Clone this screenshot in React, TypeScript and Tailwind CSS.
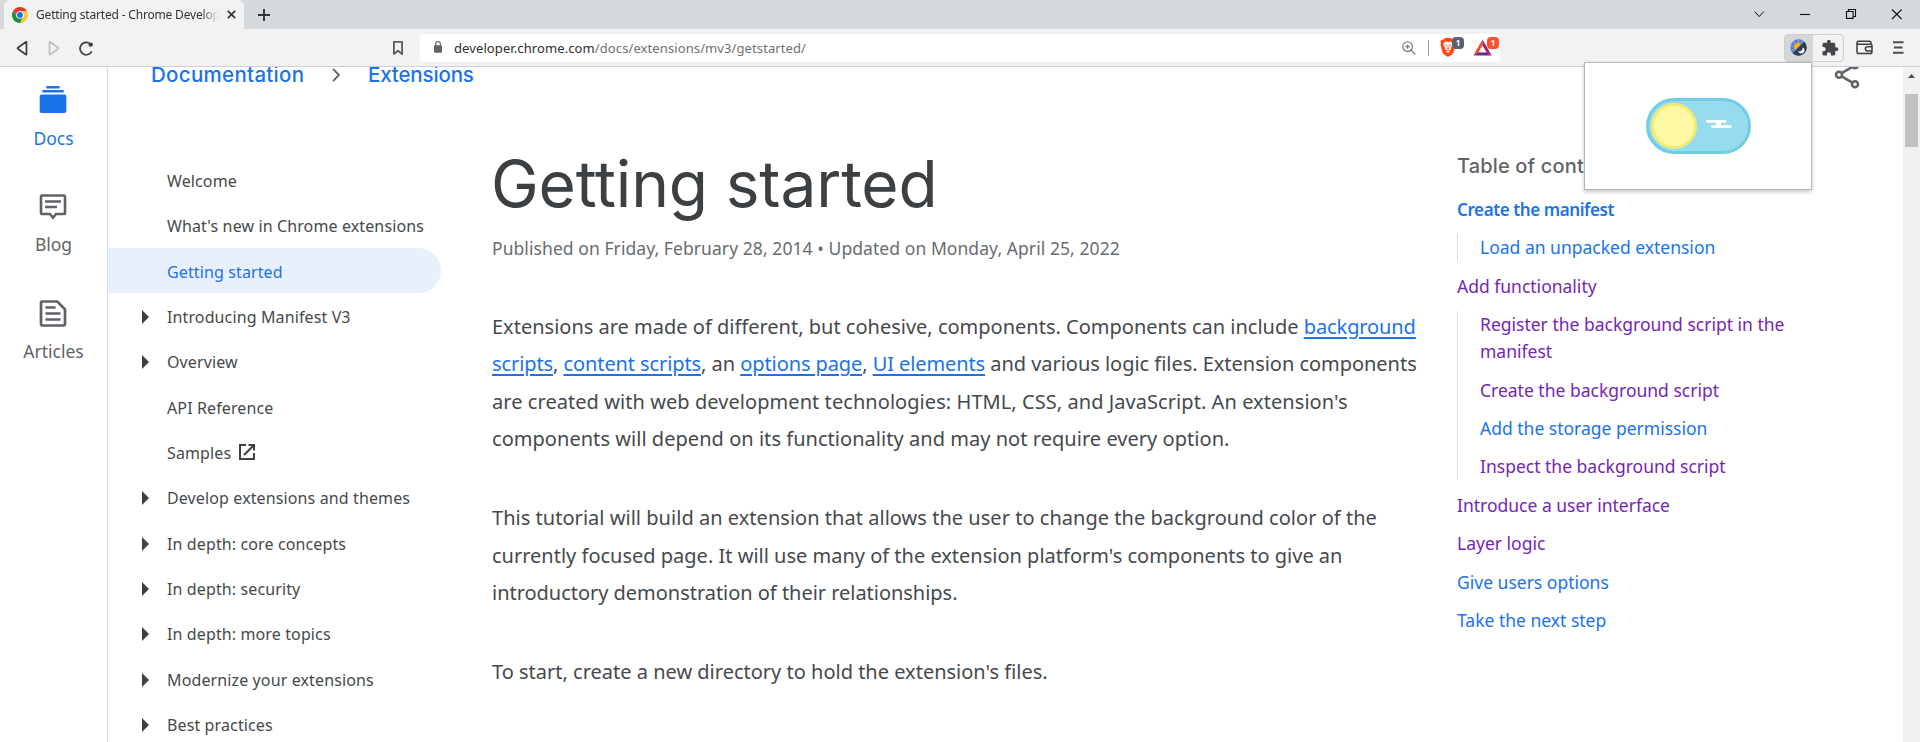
import type { ReactNode } from "react";

const ui = "font-['Noto_Sans','Open_Sans',sans-serif]";
const display = "font-['Inter',sans-serif]";

function ChromeLogo() {
  return (
    <svg width="16" height="16" viewBox="0 0 48 48" className="shrink-0">
      <path d="M24 13 H45.2 A24 24 0 0 0 3.2 12 L14.5 29.5 Z" fill="#e33b2e" />
      <path d="M33.5 29.5 L24 48 A24 24 0 0 0 45.2 13 H24 Z" fill="#fcc934" />
      <path d="M14.5 29.5 L3.2 12 A24 24 0 0 0 24 48 L33.5 29.5 Z" fill="#1e8e3e" />
      <circle cx="24" cy="24" r="11.5" fill="#fff" />
      <circle cx="24" cy="24" r="8.8" fill="#1a73e8" />
    </svg>
  );
}

function TabStrip() {
  return (
    <div className="flex h-[29px] shrink-0 items-stretch bg-[#d5d9dc] pl-1">
      <div className="flex w-60 items-center rounded-t-md bg-[#f2f2f2] pl-2">
        <ChromeLogo />
        <div className="ml-2 w-[183px] overflow-hidden text-[12px] leading-5 tracking-[-0.18px] whitespace-nowrap text-[#303236] [mask-image:linear-gradient(to_right,#000_165px,transparent_183px)]">
          Getting started - Chrome Developers
        </div>
        <svg width="9" height="9" viewBox="0 0 9 9" className="ml-2" stroke="#303236" strokeWidth="1.7">
          <path d="M.8 .8 8.2 8.2M8.2 .8 .8 8.2" />
        </svg>
      </div>
      <svg width="12" height="12" viewBox="0 0 12 12" className="mt-[9px] ml-3.5" stroke="#303236" strokeWidth="1.9">
        <path d="M6 0V12M0 6H12" />
      </svg>
      <div className="flex-1" />
      <svg width="166" height="29" viewBox="0 0 166 29" fill="none" stroke="#111" strokeWidth="1.1">
        <path d="M.6 11.5 5.2 16.6 9.8 11.5" strokeWidth="1" />
        <path d="M46 14.5H56" />
        <path d="M92.5 11.5h6.6v6.9h-6.6zM94.5 11.3V9.5h7v7h-2" />
        <path d="M138 9.5 147.6 19M147.6 9.5 138 19" />
      </svg>
    </div>
  );
}

function BraveLion() {
  return (
    <svg width="16" height="19" viewBox="0 0 16 19">
      <path d="M5 0h6l1.6 1.7 1.6-.2 1.4 2-.6 1.5.5 1.7-2 7.6c-.3 1.2-1 1.9-2 2.5L8 19l-3.500-2.200c-1-.6-1.700-1.300-2-2.500L.5 6.700 1 5 .4 3.500l1.400-2 1.600.2z" fill="#fb4a12" />
      <path d="M5.300 3.600 8 4.100 10.700 3.600 12.900 6 11.800 8.600 10.600 9.800 11.200 11.200 9.600 12.300 8 11.500 6.400 12.300 4.800 11.200 5.400 9.800 4.200 8.600 3.100 6z" fill="#fff" />
      <path d="M4.800 6.900 6.900 7.500M11.200 6.900 9.100 7.500M8 7.500v2.300M6.800 10.200 8 10.800 9.200 10.200" stroke="#fb4a12" strokeWidth="0.9" fill="none" />
      <path d="M6 13.200 8 12.400 10 13.200 8 14.900z" fill="#fff" />
    </svg>
  );
}

function BatTriangle() {
  return (
    <svg width="19" height="17" viewBox="0 0 19 17">
      <path d="M9.500 .5 .3 16.500 5.700 13.200 9.500 6.500z" fill="#ff4724" />
      <path d="M9.500 .5 18.700 16.500 13.300 13.200 9.500 6.500z" fill="#9e1f63" />
      <path d="M.3 16.500H18.700L13.300 13.200H5.700z" fill="#662d91" />
      <path d="M9.500 6.500 5.700 13.200H13.300z" fill="#fff" />
    </svg>
  );
}

function Toolbar() {
  return (
    <div className="flex h-[38px] shrink-0 items-center border-b border-[#cdd1d6] bg-[#f2f2f2]">
      <svg width="80" height="20" viewBox="0 0 80 20" className="ml-4" fill="none" strokeLinejoin="round" strokeWidth="1.7">
        <path d="M10.500 4.300V16.200Q10.500 17 9.800 16.500L1.800 10.800Q1.200 10.300 1.800 9.800L9.800 4Q10.500 3.600 10.500 4.300z" stroke="#3c3d40" />
        <path d="M33.500 4.300V16.200Q33.500 17 34.200 16.500L42.200 10.800Q42.800 10.300 42.200 9.800L34.200 4Q33.500 3.600 33.500 4.300z" stroke="#c0c0c0" />
        <path d="M75.700 13.400A6.200 6.200 0 1 1 73.200 5.100" stroke="#3c3d40" />
        <circle cx="74.700" cy="6.600" r="2.200" fill="#3c3d40" />
      </svg>
      <svg width="12" height="16" viewBox="0 0 12 16" className="ml-[296px]" fill="none" stroke="#5a5c60" strokeWidth="1.8">
        <path d="M1.900 1.900H10.100V14L6 10.700 1.900 14z" strokeLinejoin="round" />
      </svg>
      <div className="ml-4 flex h-7 w-[1080px] items-center rounded bg-white pl-3.5">
        <svg width="8" height="12" viewBox="0 0 8 12" className="mb-0.5">
          <path d="M1.700 5V2.800a2.300 2.300 0 0 1 4.600 0V5" fill="none" stroke="#5f6368" strokeWidth="1.200" />
          <rect y="4.200" width="8" height="7.600" rx="1" fill="#5f6368" />
        </svg>
        <div className="ml-3 text-[13px] leading-5 tracking-[0.1px] whitespace-nowrap text-[#6e7174]">
          <span className="text-[#2c2e31]">developer.chrome.com</span>/docs/extensions/mv3/getstarted/
        </div>
        <svg width="14" height="14" viewBox="0 0 14 14" className="ml-auto" fill="none" stroke="#6b6e73" strokeWidth="1.1">
          <circle cx="5.600" cy="5.600" r="4.800" />
          <path d="M9.200 9.200 13.300 13.300M5.600 3.400V7.800M3.400 5.600H7.800" />
        </svg>
        <div className="ml-3 h-4 w-px bg-[#9a9da1]" />
        <div className="relative ml-[11px]">
          <BraveLion />
          <span className="absolute -top-px left-3 flex h-3 w-3 items-center justify-center rounded-[4px] bg-[#5c6070] text-[8px] leading-none font-bold text-white">1</span>
        </div>
        <div className="relative mr-2 ml-[17px]">
          <BatTriangle />
          <span className="absolute -top-0.5 left-3.5 flex h-3 w-3 items-center justify-center rounded-[4px] bg-[#ff5029] text-[8px] leading-none font-bold text-white">1</span>
        </div>
      </div>
      <div className="ml-auto flex h-7 w-[60px] items-stretch overflow-hidden rounded border border-[#cfcfcf]">
        <div className="flex w-7 items-center justify-center bg-[#d6d6d6] pr-0.5">
          <svg width="17" height="17" viewBox="0 0 17 17">
            <circle cx="8.500" cy="8.500" r="8.200" fill="#4f7df5" />
            <path d="M14.300 2.700A8.200 8.200 0 1 1 2.700 14.300z" fill="#2c3e50" />
            <path d="M11 5 5.300 11A4 4 0 1 1 11 5z" fill="#ffb400" />
            <path d="M8.500 1.200V3M3.800 3.200 4.800 4.300M1.500 7.500H3M3 11.300 4 10.600M12.200 2.600 11.300 3.700" stroke="#ffb400" strokeWidth="1.200" />
            <path d="M12.500 8.200A3.300 3.300 0 1 1 8 12 3.200 3.200 0 0 0 12.500 8.200z" fill="#fff" />
          </svg>
        </div>
        <div className="flex flex-1 items-center justify-center pl-1">
          <svg width="18" height="18" viewBox="0 0 24 24" fill="#444649">
            <path d="M20.500 11H19V7c0-1.100-.9-2-2-2h-4V3.500a2.500 2.500 0 0 0-5 0V5H4c-1.100 0-1.990.9-1.990 2v3.800H3.500c1.490 0 2.700 1.210 2.700 2.700s-1.210 2.700-2.700 2.700H2V20c0 1.100.9 2 2 2h3.800v-1.500c0-1.490 1.210-2.700 2.700-2.700s2.700 1.210 2.700 2.700V22H17c1.100 0 2-.9 2-2v-4h1.500a2.500 2.500 0 0 0 0-5z" />
          </svg>
        </div>
      </div>
      <svg width="17" height="15" viewBox="0 0 17 15" className="ml-3" fill="none" stroke="#3c3d40" strokeWidth="1.500">
        <path d="M15 4.300V2.800Q15 1.300 13.500 1.300H2.500Q1 1.300 1 2.800V11.700Q1 13.500 2.800 13.500H14.200Q16 13.500 16 11.700V5.800Q16 4.300 14.500 4.300H2.500Q1 4.300 1 2.800" />
        <path d="M16 6.800H11.500a2.100 2.100 0 0 0 0 4.200H16" />
      </svg>
      <svg width="11" height="13" viewBox="0 0 11 13" className="mr-4 ml-5" stroke="#4b4d50" strokeWidth="2">
        <path d="M0 1.200H10.500M1 6.500H9.500M0 11.800H10.500" />
      </svg>
    </div>
  );
}

function RailItem({ icon, label, active }: { icon: ReactNode; label: string; active?: boolean }) {
  return (
    <div className={`flex h-[106.67px] flex-col items-center gap-[9.5px] ${active ? "text-[#1a73e8]" : "text-[#5f6368]"}`}>
      <svg width="32" height="32" viewBox="0 0 32 32" className="mr-px">{icon}</svg>
      <span className="text-[17.5px] leading-6">{label}</span>
    </div>
  );
}

function Rail() {
  return (
    <div className="w-[108px] shrink-0 border-r border-[#dadce0] pt-[17px]">
      <RailItem
        active
        label="Docs"
        icon={<path fill="currentColor" d="M9.300 2h13.400v2.600H9.300zM5.300 6h21.400v2.600H5.300zM4.500 10.500h23q1.800 0 1.800 1.800v14.900q0 1.800-1.800 1.800h-23q-1.800 0-1.800-1.800V12.300q0-1.800 1.800-1.800z" />}
      />
      <RailItem
        label="Blog"
        icon={
          <g fill="none" stroke="currentColor" strokeWidth="2.600">
            <path d="M5.300 4.500H26.700Q28 4.500 28 5.800V21.700Q28 23 26.700 23H19L16 26.700 13 23H5.300Q4 23 4 21.700V5.800Q4 4.500 5.300 4.500z" />
            <path d="M8 10.500H24M8 16H20" />
          </g>
        }
      />
      <RailItem
        label="Articles"
        icon={
          <g fill="none" stroke="currentColor" strokeWidth="2.700">
            <path d="M5.400 4.500H20.300L28 12.200V27.100Q28 28.500 26.600 28.500H5.400Q4 28.500 4 27.100V5.900Q4 4.500 5.400 4.500z" />
            <path d="M8.500 10.500H18.600M8.500 16.500H23.500M8.500 22.500H23.500" />
          </g>
        }
      />
    </div>
  );
}

const navItems: { label: string; arrow?: boolean; active?: boolean; external?: boolean }[] = [
  { label: "Welcome" },
  { label: "What's new in Chrome extensions" },
  { label: "Getting started", active: true },
  { label: "Introducing Manifest V3", arrow: true },
  { label: "Overview", arrow: true },
  { label: "API Reference" },
  { label: "Samples", external: true },
  { label: "Develop extensions and themes", arrow: true },
  { label: "In depth: core concepts", arrow: true },
  { label: "In depth: security", arrow: true },
  { label: "In depth: more topics", arrow: true },
  { label: "Modernize your extensions", arrow: true },
  { label: "Best practices", arrow: true },
];

function SideNav() {
  return (
    <nav className="w-[333px] pt-[62.5px] text-[16px] leading-6 tracking-[0.12px] whitespace-nowrap text-[#45494c]">
      {navItems.map((item) => (
        <div
          key={item.label}
          className={`flex h-[45.33px] items-center rounded-r-full pt-0.5 ${item.active ? "bg-[#e8f0fe] text-[#1a73e8]" : ""}`}
        >
          <div className="w-[59px] shrink-0 pl-[34px]">
            {item.arrow && (
              <svg width="7" height="14" viewBox="0 0 7 14" fill="#3c4043">
                <path d="M0 0 7 7 0 14z" />
              </svg>
            )}
          </div>
          {item.label}
          {item.external && (
            <svg width="18" height="18" viewBox="0 0 18 18" className="mb-0.5 ml-[7px]" fill="none" stroke="#3c4043" strokeWidth="2">
              <path d="M8 2H2V16H16V10M10.500 2H16V7.500M15.800 2.200 6 12" />
            </svg>
          )}
        </div>
      ))}
    </nav>
  );
}

function A({ children }: { children: ReactNode }) {
  return (
    <a className="tracking-[-0.1px] text-[#1a73e8] underline decoration-2 underline-offset-[3px]">{children}</a>
  );
}

function Article() {
  return (
    <article className="ml-[51px] w-[965px] pt-[53px] whitespace-nowrap text-[#45494c]">
      <h1 className={`-ml-px text-[64px] leading-[72px] tracking-[-0.15px] text-[#3c4043] ${display}`}>Getting started</h1>
      <p className="mt-4 text-[17.5px] leading-6 tracking-[0.07px] text-[#686c71]">
        Published on Friday, February 28, 2014 • Updated on Monday, April 25, 2022
      </p>
      <div className="mt-12 flex flex-col gap-[42px] text-[20px] leading-[37.33px]">
        <p>
          Extensions are made of different, but cohesive, components. Components can include <A>background</A>
          <br />
          <span className="tracking-[-0.03px]">
            <A>scripts</A>, <A>content scripts</A>, an <A>options page</A>, <A>UI elements</A> and various logic files. Extension components
          </span>
          <br />
          <span className="tracking-[0.06px]">are created with web development technologies: HTML, CSS, and JavaScript. An extension's</span>
          <br />
          <span className="tracking-[0.04px]">components will depend on its functionality and may not require every option.</span>
        </p>
        <p>
          <span className="tracking-[0.03px]">This tutorial will build an extension that allows the user to change the background color of the</span>
          <br />
          currently focused page. It will use many of the extension platform's components to give an
          <br />
          <span className="tracking-[-0.03px]">introductory demonstration of their relationships.</span>
        </p>
        <p>To start, create a new directory to hold the extension's files.</p>
      </div>
    </article>
  );
}

function TableOfContents() {
  return (
    <aside className="w-[365px] pt-[57px] text-[17.5px] leading-[27px] whitespace-nowrap text-[#7426b4]">
      <h2 className={`h-11 text-[20px] leading-7 font-medium tracking-[0.15px] text-[#5f6368] ${display}`}>Table of contents</h2>
      <div className="flex flex-col gap-[11.4px]">
        <div className="text-[17px] font-semibold tracking-[-0.4px] text-[#1a73e8]">Create the manifest</div>
        <div className="border-l border-[#dadce0] pl-[22px] text-[#1a73e8]">Load an unpacked extension</div>
        <div>Add functionality</div>
        <div className="flex flex-col gap-[11.4px] border-l border-[#dadce0] pl-[22px]">
          <div>
            Register the background script in the
            <br />
            manifest
          </div>
          <div>Create the background script</div>
          <div className="text-[#1a73e8]">Add the storage permission</div>
          <div>Inspect the background script</div>
        </div>
        <div>Introduce a user interface</div>
        <div>Layer logic</div>
        <div className="text-[#1a73e8]">Give users options</div>
        <div className="text-[#1a73e8]">Take the next step</div>
      </div>
    </aside>
  );
}

function Breadcrumbs() {
  return (
    <div className="flex h-7 shrink-0 items-start">
      <div className={`-mt-1.5 flex items-center pl-[43px] text-[20.5px] leading-7 font-medium tracking-[0.3px] text-[#1a73e8] ${display}`}>
        <span className="w-[153px]">Documentation</span>
        <svg width="8" height="14" viewBox="0 0 8 14" className="mx-7" fill="none" stroke="#5f6368" strokeWidth="1.900">
          <path d="M1 .8 7 7 1 13.200" />
        </svg>
        <span className="tracking-[-0.15px]">Extensions</span>
      </div>
      <svg width="26" height="30" viewBox="0 0 26 30" className="-mt-[7px] mr-[43px] ml-auto" fill="none" stroke="#5f6368" strokeWidth="2.500">
        <circle cx="5" cy="14.800" r="3" />
        <circle cx="21" cy="5.200" r="3" />
        <circle cx="21" cy="24.300" r="3" />
        <path d="M7.600 13.200 18.400 6.800M7.600 16.400 18.400 22.700" />
      </svg>
    </div>
  );
}

function Scrollbar() {
  return (
    <div className="flex w-[17px] shrink-0 flex-col items-center bg-[#f1f1f1] pt-[7px]">
      <svg width="7" height="4" viewBox="0 0 7 4" fill="#505050">
        <path d="M3.500 0 7 4H0z" />
      </svg>
      <div className="mt-4 h-[53px] w-[13px] bg-[#c1c1c1]" />
    </div>
  );
}

function ThemePopup() {
  return (
    <div className="absolute top-[62px] left-[1584px] flex h-32 w-[228px] items-center justify-center border border-[#b4b7b9] bg-white shadow-[0_2px_4px_rgba(0,0,0,0.22)]">
      <div className="flex h-14 w-[105px] items-center rounded-full border-[3px] border-[#72cce3] bg-[#96dcee] pl-0.5">
        <div className="h-[46px] w-[46px] rounded-full border-[3px] border-[#f5eb71] bg-[#fff8a5]" />
        <svg width="26" height="9" viewBox="0 0 26 9" className="mb-[3px] ml-[9px]" fill="#fff">
          <rect x="0" y="0" width="20.500" height="2.700" rx="1.300" />
          <rect x="10" y="2" width="5" height="4" />
          <rect x="5" y="5.200" width="20.500" height="2.700" rx="1.300" />
        </svg>
      </div>
    </div>
  );
}

export default function App() {
  return (
    <div className={`relative flex h-[742px] w-[1920px] flex-col overflow-hidden bg-white ${ui}`}>
      <TabStrip />
      <Toolbar />
      <div className="flex min-h-0 flex-1 overflow-hidden">
        <Rail />
        <div className="flex min-w-0 flex-1 flex-col">
          <Breadcrumbs />
          <div className="flex">
            <SideNav />
            <Article />
            <TableOfContents />
          </div>
        </div>
        <Scrollbar />
      </div>
      <ThemePopup />
    </div>
  );
}
